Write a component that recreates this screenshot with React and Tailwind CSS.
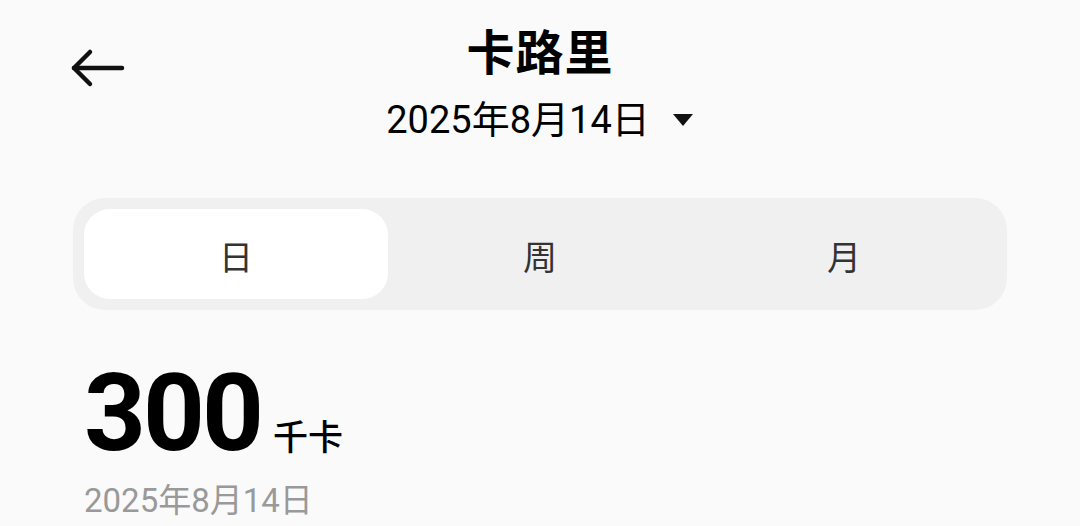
import React, { useState } from 'react';

const font = { fontFamily: 'Roboto, "Noto Sans CJK SC", sans-serif' };

function BackArrow() {
  return (
    <svg width="56" height="40" viewBox="0 0 56 40" fill="none" stroke="#111" strokeWidth="4.5" strokeLinecap="round" strokeLinejoin="round">
      <path d="M52 20H4" />
      <path d="M20 4L4 20L20 36" />
    </svg>
  );
}

export default function App() {
  const [tab, setTab] = useState('日');
  const tabs = ['日', '周', '月'];

  return (
    <div className="w-[1080px] h-[526px] overflow-hidden bg-[#fafafa] text-black" style={font}>
      {/* Header */}
      <div className="grid grid-cols-[1fr_auto_1fr] items-start pt-[22px]">
        <div className="pl-[70px] pt-[26px]">
          <BackArrow />
        </div>
        <div className="flex flex-col items-center">
          <h1 className="text-[48px] leading-[64px] font-bold tracking-[1px]">卡路里</h1>
          <button className="flex items-center gap-[22px] mt-[10px] text-[38px] leading-[48px]">
            <span>2025年8月14日</span>
            <svg width="22" height="14" viewBox="0 0 22 14"><path d="M1 1H21L11 13Z" fill="#111" /></svg>
          </button>
        </div>
        <div />
      </div>

      {/* Segmented tabs */}
      <div className="mx-[73px] mt-[54px] w-[934px] h-[112px] rounded-[32px] bg-[#f0f0f0] p-[11px] grid grid-cols-3">
        {tabs.map((t) => (
          <button
            key={t}
            onClick={() => setTab(t)}
            className={`rounded-[26px] pt-[8px] text-[34px] text-[#333] flex items-center justify-center ${tab === t ? 'bg-white' : ''}`}
          >
            {t}
          </button>
        ))}
      </div>

      {/* Summary */}
      <div className="px-[84px] mt-[49px]">
        <div className="flex items-baseline gap-[12px]">
          <span className="text-[108px] leading-[108px] font-bold tracking-[-3px]">300</span>
          <span className="text-[35px] font-medium">千卡</span>
        </div>
        <div className="mt-[14px] text-[33px] leading-[40px] text-[#999]">2025年8月14日</div>
      </div>
    </div>
  );
}
